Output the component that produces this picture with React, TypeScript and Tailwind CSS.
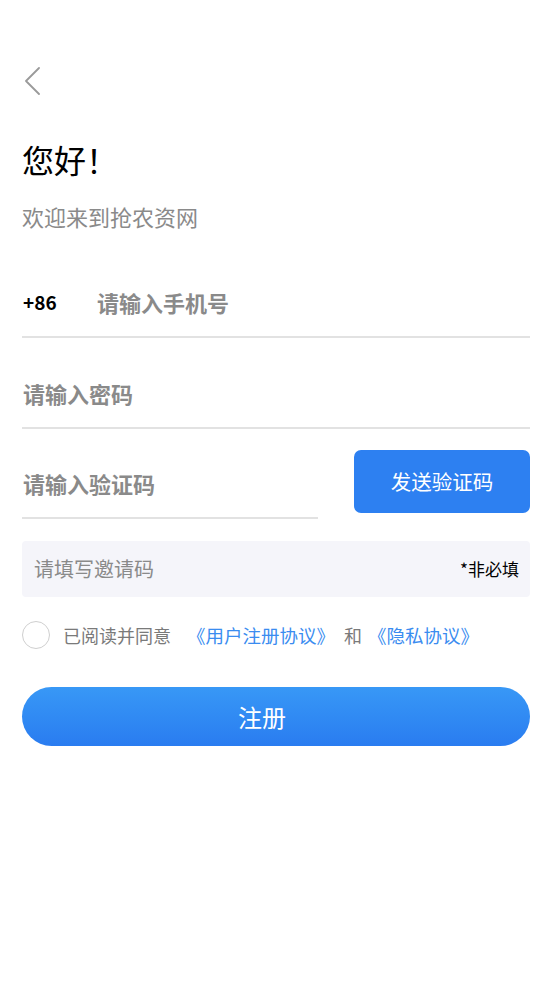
import { useState } from "react";

const FONT = { fontFamily: '"Noto Sans CJK SC", "Noto Sans", sans-serif' };

function BackArrow() {
  return (
    <svg width="16" height="28" viewBox="0 0 16 28" fill="none" aria-hidden>
      <path d="M15 1L2 14l13 13" stroke="#9a9a9a" strokeWidth="1.8" strokeLinecap="round" strokeLinejoin="round" />
    </svg>
  );
}

export default function App() {
  const [agreed, setAgreed] = useState(false);

  return (
    <div className="min-h-[983px] w-full bg-white px-[22px]" style={FONT}>
      <div className="pt-[67px] pl-[2px]">
        <BackArrow />
      </div>

      <h1 className="mt-[44px] text-[32px] leading-[40px] font-normal text-black">您好！</h1>
      <p className="mt-[22px] text-[22px] leading-[30px] text-[#8a8a8a]">欢迎来到抢农资网</p>

      <div className="mt-[37px] flex h-[70px] items-center border-b-2 border-[#e2e2e2]">
        <span className="inline-block w-[75px] shrink-0 pl-[1px] text-[19px] font-bold text-black">+86</span>
        <input
          className="min-w-0 flex-1 bg-transparent text-[22px] font-bold outline-none placeholder:text-[#8a8a8a]"
          placeholder="请输入手机号"
        />
      </div>

      <div className="mt-[21px] flex h-[70px] items-center border-b-2 border-[#e2e2e2]">
        <input
          type="password"
          className="min-w-0 flex-1 bg-transparent pl-[1px] text-[22px] font-bold outline-none placeholder:text-[#8a8a8a]"
          placeholder="请输入密码"
        />
      </div>

      <div className="mt-[20px] flex items-start justify-between">
        <div className="flex h-[70px] w-[296px] items-center border-b-2 border-[#e2e2e2]">
          <input
            className="w-full bg-transparent pl-[1px] text-[22px] font-bold outline-none placeholder:text-[#8a8a8a]"
            placeholder="请输入验证码"
          />
        </div>
        <button className="mt-[1px] flex h-[63px] w-[176px] items-center justify-center rounded-[7px] bg-[#2d80f1] text-[20.5px] text-white">
          发送验证码
        </button>
      </div>

      <div className="mt-[22px] flex h-[56px] items-center justify-between rounded-[4px] bg-[#f5f5fa] pl-[12px] pr-[11px]">
        <input
          className="min-w-0 flex-1 bg-transparent text-[20px] outline-none placeholder:text-[#8a8a8a]"
          placeholder="请填写邀请码"
        />
        <span className="text-[17px] text-black">*非必填</span>
      </div>

      <div className="mt-[24px] flex items-center">
        <button
          onClick={() => setAgreed(!agreed)}
          className="h-[28px] w-[28px] shrink-0 rounded-full border-[1.5px] border-[#cfcfcf] bg-white"
        />
        <p className="ml-[13px] flex items-center text-[18px] leading-[28px] text-[#7a7a7a]">
          <span>已阅读并同意</span>
          <span className="ml-[16px] text-[18.5px] text-[#3a8cf0]">《用户注册协议》</span>
          <span className="ml-[9px]">和</span>
          <span className="ml-[6px] text-[18.5px] text-[#3a8cf0]">《隐私协议》</span>
        </p>
      </div>

      <button className="mt-[38px] flex h-[59px] w-full items-center justify-center rounded-full bg-gradient-to-b from-[#3898f6] to-[#2a7cf0] pr-[28px] text-[24px] text-white">
        注册
      </button>
    </div>
  );
}
